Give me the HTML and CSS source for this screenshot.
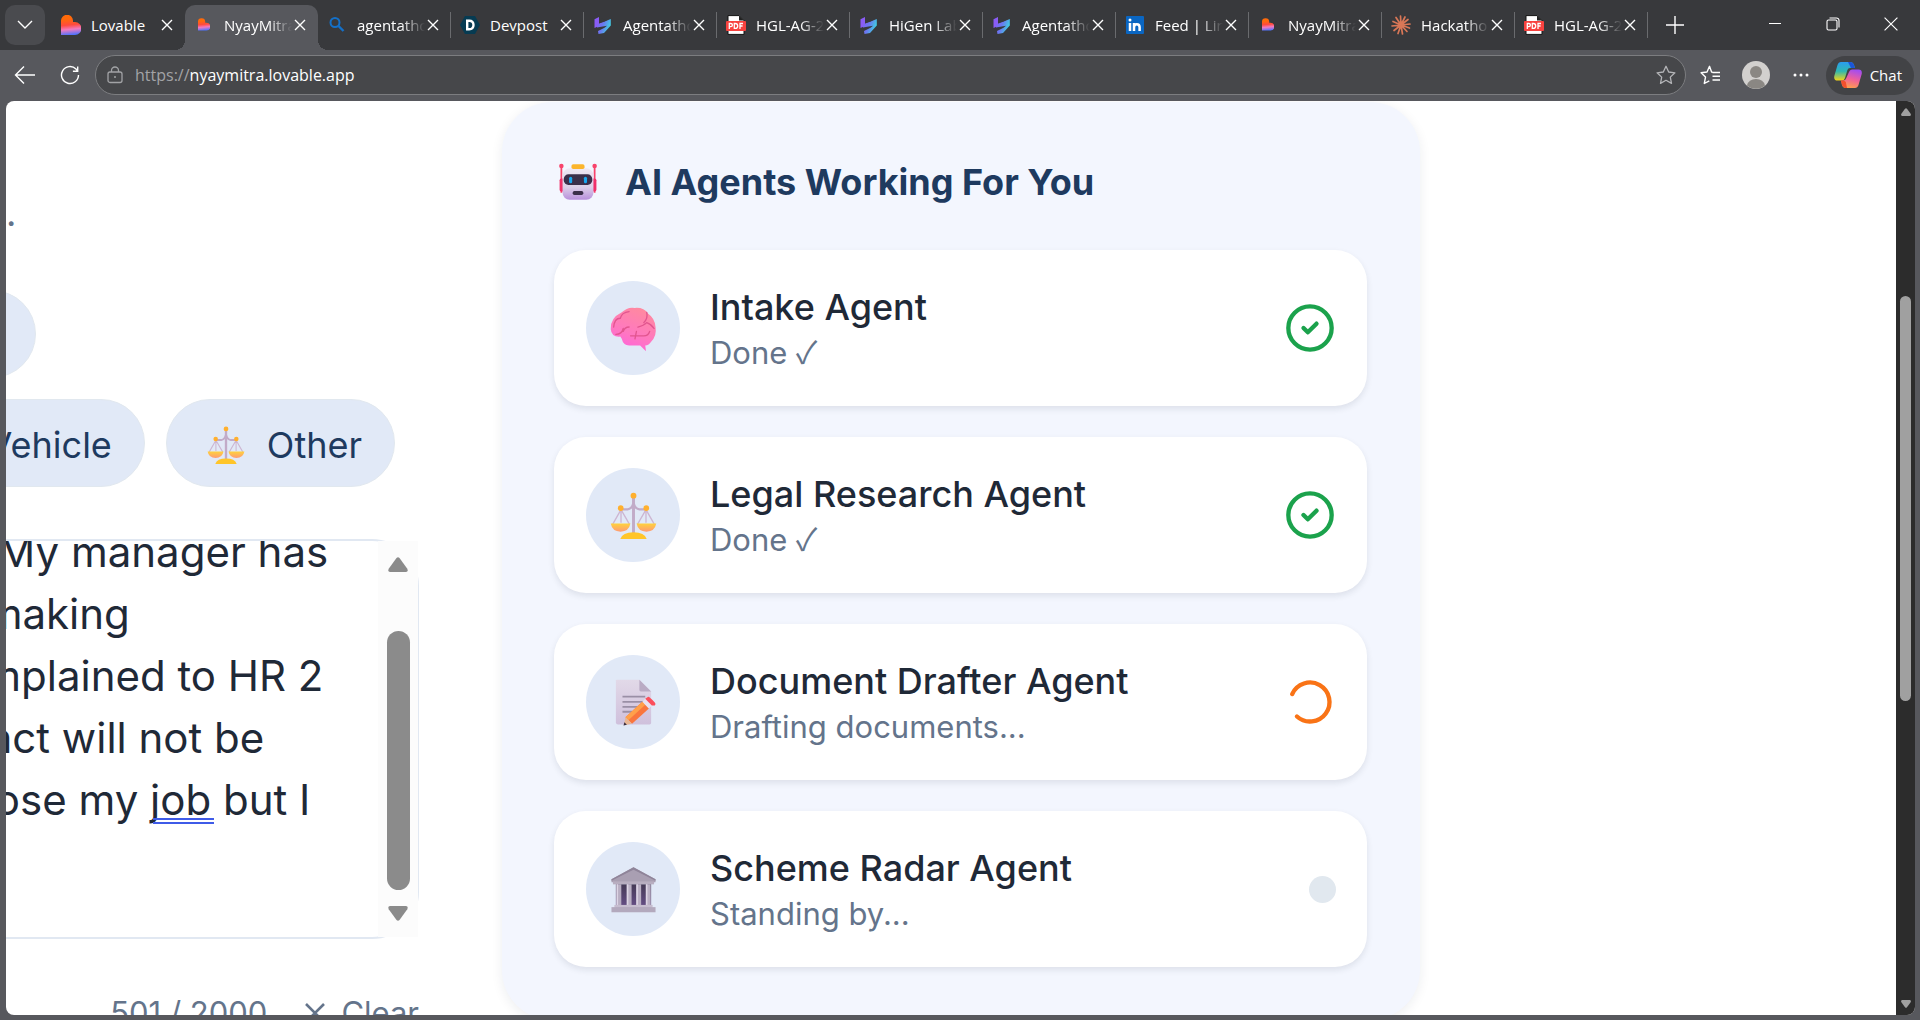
FILE: index.html
```html
<!DOCTYPE html>
<html lang="en">
<head>
<meta charset="utf-8">
<title>NyayMitra</title>
<link rel="stylesheet" href="styles.css">
</head>
<body>
<svg class="sprite" aria-hidden="true">
  <defs>
    <linearGradient id="g-heart" x1="0.4" y1="0" x2="0.5" y2="1">
      <stop offset="0.2" stop-color="#ff6a0a"/><stop offset="0.5" stop-color="#ff4a3d"/><stop offset="0.72" stop-color="#f27ac0"/><stop offset="1" stop-color="#4a72ff"/>
    </linearGradient>
    <linearGradient id="g-hi" x1="0" y1="0" x2="1" y2="0.4">
      <stop offset="0" stop-color="#8a5cf5"/><stop offset="0.5" stop-color="#6a78f0"/><stop offset="1" stop-color="#3fd0e0"/>
    </linearGradient>
    <linearGradient id="g-pan" x1="0" y1="0" x2="0" y2="1">
      <stop offset="0" stop-color="#ffd23c"/><stop offset="1" stop-color="#ff9a74"/>
    </linearGradient>
    <linearGradient id="g-brain" x1="0.7" y1="0" x2="0.3" y2="1">
      <stop offset="0" stop-color="#ff8a9e"/><stop offset="0.6" stop-color="#ff78c0"/><stop offset="1" stop-color="#ff62de"/>
    </linearGradient>
    <linearGradient id="g-paper" x1="0" y1="0" x2="0" y2="1">
      <stop offset="0" stop-color="#e2d9e8"/><stop offset="1" stop-color="#cfc0dc"/>
    </linearGradient>
    <linearGradient id="g-robot" x1="0" y1="0" x2="0" y2="1">
      <stop offset="0" stop-color="#eee8f4"/><stop offset="0.6" stop-color="#dccfe8"/><stop offset="1" stop-color="#b88fdc"/>
    </linearGradient>
    <linearGradient id="g-dark" x1="0" y1="0" x2="0" y2="1">
      <stop offset="0" stop-color="#453a55"/><stop offset="1" stop-color="#68508a"/>
    </linearGradient>
    <linearGradient id="g-cop1" x1="0" y1="0" x2="0" y2="1">
      <stop offset="0" stop-color="#2a9cf0"/><stop offset="0.5" stop-color="#2fb8b0"/><stop offset="1" stop-color="#f4d516"/>
    </linearGradient>
    <linearGradient id="g-cop2" x1="0.6" y1="0" x2="0.3" y2="1">
      <stop offset="0" stop-color="#a34df0"/><stop offset="0.5" stop-color="#f0609a"/><stop offset="1" stop-color="#ffa348"/>
    </linearGradient>
  </defs>
  <symbol id="heart" viewBox="0 0 20 20"><path fill="url(#g-heart)" d="M0 6a6 6 0 0 1 12-.5V7h2a6.500 6.500 0 0 1 0 13H0z"/></symbol>
  <symbol id="search" viewBox="0 0 20 20"><circle cx="8" cy="7.500" r="4.500" fill="none" stroke="#1470c8" stroke-width="2"/><path d="M11.500 11l5 5" stroke="#1470c8" stroke-width="2.400"/></symbol>
  <symbol id="devpost" viewBox="0 0 20 20"><path fill="#063b52" d="M5 1h10l5 9-5 9H5l-5-9z"/><path fill="none" stroke="#fff" stroke-width="2.400" d="M7.200 5.700v8.600h2q4.300 0 4.300-4.300t-4.300-4.300z"/></symbol>
  <symbol id="higen" viewBox="0 0 20 20"><path fill="#8a5cf5" d="M1.500 4.200L6 2v9l-4.500 2z"/><path fill="url(#g-hi)" d="M4 9.200l7-2.400L17.800 4v6.500L11 18l-5.500 1-.5-3 6.500-3.200 2.500-2L4 12.500z"/><path fill="#38393c" d="M6 2.500v5.700l8-2.600z"/></symbol>
  <symbol id="pdf" viewBox="0 0 20 20"><path fill="#fff" stroke="#111" stroke-width="1" d="M2 .6h11l5 5v13.800H2z"/><path fill="#222" d="M13 .6v5h5z"/><rect x="0" y="6" width="20" height="10" rx="1" fill="#f8423f"/><path fill="none" stroke="#fff" stroke-width="1.300" d="M3.300 14V8.500h1.500a1.500 1.500 0 0 1 0 3.200H3.500M8.300 8.500v4.900h1q2.400 0 2.400-2.450t-2.400-2.450zM14 14V8.500h3M14 11h2.600"/></symbol>
  <symbol id="linkedin" viewBox="0 0 20 20"><rect x="1" y="1" width="18" height="18" rx="1" fill="#0a66c2"/><path stroke="#fff" stroke-width="2.500" fill="none" d="M5 8v8M9 8v8M9 12.500q0-3.300 2.800-3.300t2.800 3V16"/><circle cx="5" cy="5" r="1.500" fill="#fff"/></symbol>
  <symbol id="burst" viewBox="0 0 20 20"><path stroke="#d97757" stroke-width="1.700" stroke-linecap="round" d="M10 10L9.500 1M10 10l4-8M10 10l7-5.500M10 10l9-1M10 10l8.500 3M10 10l6 6.500M10 10l1.500 9M10 10l-3 8.500M10 10l-7 5.500M10 10l-9 1M10 10L2 6.500M10 10L5 2.500"/></symbol>
  <symbol id="x" viewBox="0 0 12 12"><path d="M1 1l10 10M11 1L1 11" stroke="currentColor" stroke-width="1.400" fill="none"/></symbol>
  <symbol id="scales" viewBox="0 0 32 32">
    <path fill="none" stroke="#cdb6d2" stroke-width="0.900" d="M7.500 12L1.800 22M7.500 12v9M7.500 12l5.800 10M24.500 12l-5.800 10M24.500 12v9M24.500 12l5.700 10"/>
    <path fill="none" stroke="#c2abc8" stroke-width="1.500" d="M7.500 11.800h4.500q3-.5 3.800-4M24.500 11.800H20q-3-.5-3.800-4"/>
    <path stroke="#c2abc8" stroke-width="2" d="M16 4v24"/>
    <path fill="url(#g-pan)" d="M.5 21.500h13.400q-1 5.500-6.700 5.500T.5 21.500zM18.100 21.500h13.400q-1 5.500-6.700 5.500t-6.700-5.500z"/>
    <path fill="#ffc529" d="M7 32q1.500-4.600 9-4.600T25 32z"/>
    <circle cx="16" cy="2.500" r="2" fill="#ffb02e"/><circle cx="7.300" cy="11" r="1.900" fill="#ffb02e"/><circle cx="24.700" cy="11" r="1.900" fill="#ffb02e"/>
  </symbol>
</svg>

<header class="browser">
  <div class="tabstrip">
    <button class="tab-search" aria-label="Search tabs"><svg width="16" height="10" viewBox="0 0 16 10"><path d="M1 1l7 7 7-7" fill="none" stroke="#fff" stroke-width="1.400"/></svg></button>
    <nav class="tabs" aria-label="Tabs">
      <div class="tab tab--plain"><svg class="fav"><use href="#heart"/></svg><span class="tab-title">Lovable</span><button class="tab-close" aria-label="Close tab"><svg><use href="#x"/></svg></button></div>
      <div class="tab tab--active"><svg class="fav fav--small"><use href="#heart"/></svg><span class="tab-title">NyayMitra</span><button class="tab-close" aria-label="Close tab"><svg><use href="#x"/></svg></button></div>
      <div class="tab"><svg class="fav"><use href="#search"/></svg><span class="tab-title">agentatho</span><button class="tab-close" aria-label="Close tab"><svg><use href="#x"/></svg></button></div>
      <div class="tab"><svg class="fav"><use href="#devpost"/></svg><span class="tab-title">Devpost</span><button class="tab-close" aria-label="Close tab"><svg><use href="#x"/></svg></button></div>
      <div class="tab"><svg class="fav"><use href="#higen"/></svg><span class="tab-title">Agentatho</span><button class="tab-close" aria-label="Close tab"><svg><use href="#x"/></svg></button></div>
      <div class="tab"><svg class="fav"><use href="#pdf"/></svg><span class="tab-title">HGL-AG-2</span><button class="tab-close" aria-label="Close tab"><svg><use href="#x"/></svg></button></div>
      <div class="tab"><svg class="fav"><use href="#higen"/></svg><span class="tab-title">HiGen Lab</span><button class="tab-close" aria-label="Close tab"><svg><use href="#x"/></svg></button></div>
      <div class="tab"><svg class="fav"><use href="#higen"/></svg><span class="tab-title">Agentatho</span><button class="tab-close" aria-label="Close tab"><svg><use href="#x"/></svg></button></div>
      <div class="tab"><svg class="fav"><use href="#linkedin"/></svg><span class="tab-title">Feed | Lin</span><button class="tab-close" aria-label="Close tab"><svg><use href="#x"/></svg></button></div>
      <div class="tab"><svg class="fav fav--small"><use href="#heart"/></svg><span class="tab-title">NyayMitra</span><button class="tab-close" aria-label="Close tab"><svg><use href="#x"/></svg></button></div>
      <div class="tab"><svg class="fav"><use href="#burst"/></svg><span class="tab-title">Hackatho</span><button class="tab-close" aria-label="Close tab"><svg><use href="#x"/></svg></button></div>
      <div class="tab"><svg class="fav"><use href="#pdf"/></svg><span class="tab-title">HGL-AG-2</span><button class="tab-close" aria-label="Close tab"><svg><use href="#x"/></svg></button></div>
    </nav>
    <button class="new-tab" aria-label="New tab"><svg width="20" height="20" viewBox="0 0 20 20"><path d="M10 1v18M1 10h18" stroke="#fff" stroke-width="1.400"/></svg></button>
    <div class="window-controls">
      <button aria-label="Minimize"><svg width="14" height="14" viewBox="0 0 14 14"><path d="M1 6.500h12" stroke="#fff"/></svg></button>
      <button aria-label="Restore"><svg width="14" height="14" viewBox="0 0 14 14" fill="none" stroke="#fff" stroke-width="1.100"><rect x="1" y="3" width="10" height="10" rx="1.500"/><path d="M3.500 1h7A2.500 2.500 0 0 1 13 3.500v7"/></svg></button>
      <button aria-label="Close"><svg width="14" height="14" viewBox="0 0 12 12"><path d="M.5.500l11 11M11.500.500l-11 11" stroke="#fff"/></svg></button>
    </div>
  </div>
  <div class="toolbar">
    <div class="tool-group">
      <button class="tool" aria-label="Back"><svg width="22" height="20" viewBox="0 0 22 20" fill="none" stroke="#fff" stroke-width="1.400"><path d="M21 10H2M10 1.500L1.500 10l8.500 8.500"/></svg></button>
      <button class="tool" aria-label="Refresh"><svg width="20" height="20" viewBox="0 0 20 20" fill="none" stroke="#fff" stroke-width="1.400"><path d="M18.500 10A8.500 8.500 0 1 1 16 4l1.500 1.800M17.700 1.500v4.800h-4.800"/></svg></button>
    </div>
    <div class="address">
      <svg width="16" height="18" viewBox="0 0 16 18" fill="none" stroke="#a2a3a6" stroke-width="1.300"><rect x="1" y="6" width="14" height="10.500" rx="2"/><path d="M4.500 6V4.500a3.500 3.500 0 0 1 7 0V6"/><circle cx="8" cy="11" r="1" fill="#a2a3a6" stroke="none"/></svg>
      <span class="url" role="textbox" aria-label="Address"><span class="url-scheme">https://</span>nyaymitra.lovable.app</span>
      <svg width="20" height="20" viewBox="0 0 20 20" fill="none" stroke="#b4b5b8" stroke-width="1.300" stroke-linejoin="round"><path d="M10 1.300l2.700 5.700 6.200.8-4.600 4.300 1.200 6.300L10 15.300l-5.500 3.100 1.200-6.300L1.100 7.800l6.200-.8z"/></svg>
    </div>
    <div class="tool-group">
      <button class="tool" aria-label="Favorites"><svg width="21" height="20" viewBox="0 0 21 20" fill="none" stroke="#fff" stroke-width="1.400" stroke-linejoin="round"><path d="M12.500 7.200l-.9-.2L9.500 1.300 7 7l-5.900.8 4.400 4.300-1.200 6.400 5-2.600M12.500 7.500H20M12.500 11.200H20M12.500 15H20"/></svg></button>
      <button class="tool" aria-label="Profile"><svg width="28" height="28" viewBox="0 0 28 28"><circle cx="14" cy="14" r="14" fill="#d2d0ce"/><circle cx="14" cy="11" r="6" fill="#8a8783"/><path fill="#8a8783" d="M5 24.500q1.500-6.500 9-6.500t9 6.500A14 14 0 0 1 5 24.500z"/></svg></button>
      <button class="tool" aria-label="Settings and more"><svg width="16" height="4" viewBox="0 0 16 4" fill="#fff"><circle cx="2" cy="2" r="1.500"/><circle cx="8" cy="2" r="1.500"/><circle cx="14" cy="2" r="1.500"/></svg></button>
    </div>
    <button class="chat"><svg width="28" height="26" viewBox="0 0 28 26"><path fill="url(#g-cop1)" d="M7 0h9q3 0 4 3l1 3h-5q-2 0-2.600 2L11 16q-.8 2.500-3 2.500H3.500Q-.5 18.500.3 14L3.500 3Q4.500 0 7 0z"/><path fill="#1c55d8" d="M14 0h2q3 0 4 3l1 3h-4q-1.500-3-3-6z"/><path fill="url(#g-cop2)" d="M21 26h-9q-3 0-4-3l-1-4.500h2q2.500 0 3.300-2.500L15 10q.8-2.500 3-2.500h6.500q4 0 3.200 4.500L24.500 23q-1 3-3.500 3z"/><path fill="#f2502e" d="M13 26h-1q-3 0-4-3l-1-4.500h2q2 0 2.800 1.500z"/></svg>Chat</button>
  </div>
</header>

<div class="viewport">
  <main class="page">
    <section class="intake" aria-label="Your problem">
      <p class="lead">.</p>
      <div class="chips">
        <div class="chip-row chip-row--short"><button class="chip" aria-label="Topic"></button></div>
        <div class="chip-row">
          <button class="chip">Vehicle</button>
          <button class="chip"><svg class="chip-icon"><use href="#scales"/></svg>Other</button>
        </div>
      </div>
      <div class="editor">
        <textarea id="story" class="story" aria-label="Describe your problem" spellcheck="false">
at work. My manager has
kept on making
and I complained to HR 2
so contract will not be
want to lose my job but I
</textarea>
        <span class="grammar-mark"></span>
        <div class="scroll scroll--light" aria-hidden="true">
          <svg width="20" height="15" viewBox="0 0 20 15"><path fill="#8b8b8b" d="M8.500 1q1.500-1.600 3 0l7.800 10.800q1.200 3-1.300 3.200H2Q-.5 14.800.7 11.800z"/></svg>
          <div class="thumb"></div>
          <svg width="20" height="15" viewBox="0 0 20 15"><path fill="#8b8b8b" d="M8.500 14q1.500 1.600 3 0l7.800-10.800Q20.500.2 18 0H2Q-.5.2.7 3.200z"/></svg>
        </div>
      </div>
      <div class="editor-foot">
        <span>501 / 2000</span>
        <button class="clear"><svg width="20" height="20" viewBox="0 0 20 20"><path d="M1 1l18 18M19 1L1 19" stroke="currentColor" stroke-width="2.600"/></svg>Clear</button>
      </div>
    </section>

    <section class="agents">
      <h2 class="agents-title">
        <svg width="38" height="38" viewBox="0 0 32 32"><path stroke="#f8436b" stroke-width="1.500" d="M2 3v22M30 3v22"/><circle cx="2" cy="2.500" r="1.900" fill="#f8436b"/><circle cx="30" cy="2.500" r="1.900" fill="#f8436b"/><rect x=".5" y="13" width="4" height="11" rx="1.500" fill="#f0306a"/><rect x="27.500" y="13" width="4" height="11" rx="1.500" fill="#f0306a"/><rect x="3" y="4.500" width="26" height="26.500" rx="6" fill="url(#g-robot)"/><rect x="10.500" y="1" width="11" height="4" rx="1.500" fill="#fbb52c"/><rect x="4" y="9.500" width="24" height="9" rx="4" fill="#3b2f4a"/><rect x="8.500" y="11.500" width="2.600" height="5.500" rx="1.300" fill="#18a8f0"/><rect x="21" y="11.500" width="2.600" height="5.500" rx="1.300" fill="#18a8f0"/><rect x="11.500" y="23.500" width="9" height="3.500" rx="1.500" fill="#3b2f4a"/></svg>
        AI Agents Working For You
      </h2>
      <ul class="agent-list">
        <li class="agent">
          <span class="avatar"><svg viewBox="0 0 32 32"><path fill="url(#g-brain)" d="M8 5q4-4 9-3 6-.5 9 4 4.500 3 5 9 1 6-3 10-1.500 2.500-4 2.500l.5 4-4-4H13q-4 0-5-4.500l-1-1.500q-6 .5-6.500-5Q0 9 8 5z"/><path fill="none" stroke="#e2558f" stroke-width="0.900" stroke-linecap="round" d="M2.500 15Q3 9 7 9q1-4 6-4.500M25 5q1 4-2 7M19 15q4-1 6-3 3 1 5 4M9 16q-1 4-5 4M13 15q-3 0-4 3M14 21h9M18 18l-1 5M23 21q3 0 4-3"/></svg></span>
          <div class="agent-text"><h3>Intake Agent</h3><p>Done <span class="tick">✓</span></p></div>
          <svg class="status status--done" viewBox="0 0 24 24"><circle cx="12" cy="12" r="10"/><path d="M9 12l2 2 4-4"/></svg>
        </li>
        <li class="agent">
          <span class="avatar"><svg><use href="#scales"/></svg></span>
          <div class="agent-text"><h3>Legal Research Agent</h3><p>Done <span class="tick">✓</span></p></div>
          <svg class="status status--done" viewBox="0 0 24 24"><circle cx="12" cy="12" r="10"/><path d="M9 12l2 2 4-4"/></svg>
        </li>
        <li class="agent">
          <span class="avatar"><svg viewBox="0 0 32 32"><path fill="url(#g-paper)" d="M4.500.5H20l8 8V30q0 1-1 1H5.500q-1.500 0-1.500-1.500V1z"/><path fill="#b9abc4" d="M20 .5l8 8h-7q-1 0-1-1z"/><path stroke="#9a8fa6" stroke-width="1.200" d="M8.500 12H24M8.500 15.500H23M8.500 19H19M8.500 22.300H15"/><path fill="#f9763e" d="M10.500 26L22 15.500l4.500 4.500L15 30.500z"/><path fill="#ffa04a" d="M10.500 26L22 15.500l2 2L12.500 28z"/><path fill="#e9b692" d="M10.500 26l4.500 4.500-5.500 1z"/><path fill="#3a2f40" d="M9.800 29.500l1.700 1.700-2.300.5z"/><path fill="#e9e2f0" d="M22 15.500l2-2 4.500 4.500-2 2z"/><path fill="#fb4f5c" d="M24 13.500l2-1.500q1 0 4.500 4 1 1 0 2L28.500 18z"/></svg></span>
          <div class="agent-text"><h3>Document Drafter Agent</h3><p>Drafting documents...</p></div>
          <svg class="status status--busy" viewBox="0 0 24 24"><path transform="rotate(204 12 12)" d="M21 12a9 9 0 1 1-6.219-8.560"/></svg>
        </li>
        <li class="agent">
          <span class="avatar"><svg viewBox="0 0 32 32"><path fill="#a99fb2" d="M16 .8L31 9v2H1V9z"/><path fill="#8f8499" d="M16 .8L31 9v1L16 2.500 1 10V9z"/><rect x="2" y="10.500" width="28" height="2" fill="#b8aec0"/><rect x="4" y="12.500" width="24" height="16" fill="url(#g-dark)"/><path stroke="#b9afc3" stroke-width="3.400" d="M6 12.500v15.500M13 12.500v15.500M19.500 12.500v15.500M26 12.500v15.500"/><path stroke="#dcd4e4" stroke-width="1" d="M5 12.500v15.500M12 12.500v15.500M18.500 12.500v15.500M25 12.500v15.500"/><rect x="3" y="26.500" width="26" height="2" fill="#c6bdcf"/><rect x="1" y="28" width="30" height="3.500" fill="#b3a9bd"/></svg></span>
          <div class="agent-text"><h3>Scheme Radar Agent</h3><p>Standing by...</p></div>
          <span class="status-idle"></span>
        </li>
      </ul>
    </section>
  </main>
  <div class="scroll scroll--dark" aria-hidden="true">
    <svg width="10" height="8" viewBox="0 0 10 8"><path fill="#a0a0a0" d="M4 .8q1-1 2 0L9.800 6q.4 1.700-.8 2H1Q-.2 7.700.2 6z"/></svg>
    <div class="thumb"></div>
    <svg width="10" height="8" viewBox="0 0 10 8"><path fill="#a0a0a0" d="M4 7.200q1 1 2 0L9.800 2Q10.200.3 9 0H1Q-.2.3.2 2z"/></svg>
  </div>
</div>
<script src="script.js"></script>
</body>
</html>
```

FILE: styles.css
```css
*, *::before, *::after { box-sizing: border-box; }

body {
  margin: 0;
  height: 100vh;
  display: flex;
  flex-direction: column;
  overflow: hidden;
  background: #57585d;
  font-family: Inter, "Liberation Sans", sans-serif;
}

h2, h3, p, ul { margin: 0; padding: 0; }
button { border: 0; padding: 0; background: none; color: inherit; font: inherit; }
svg { display: block; flex: none; }
.sprite { position: absolute; width: 0; height: 0; }

/* Browser frame */
.browser { flex: none; color: #fff; font-family: "Open Sans", "Noto Sans", sans-serif; }

.tabstrip { display: flex; align-items: center; height: 50px; padding-left: 5px; background: #38393c; }
.tab-search { display: grid; place-items: center; width: 40px; height: 40px; margin-right: 7px; border-radius: 10px; background: #4a4b4f; }
.tabs { display: flex; align-self: stretch; min-width: 0; }
.tab { position: relative; display: flex; align-items: center; gap: 10px; width: 133px; padding: 0 12px 0 9px; }
.tab::after { content: ""; position: absolute; right: 0; top: 12px; width: 1px; height: 26px; background: #6a6b6e; }
.tab--plain::after { content: none; }
.tab--active { margin-top: 5px; padding-bottom: 5px; border-radius: 10px 10px 0 0; background: #57585d; }
.tab--active::before, .tab--active::after {
  content: ""; position: absolute; top: auto; right: auto; bottom: 0; left: -10px; width: 10px; height: 10px;
  background: radial-gradient(circle at 0 0, transparent 10px, #57585d 10px);
}
.tab--active::after { left: 100%; background: radial-gradient(circle at 100% 0, transparent 10px, #57585d 10px); }
.fav { width: 20px; height: 20px; }
.fav--small { padding: 3px 4px 4px; }
.tab-title {
  flex: 1; min-width: 0; overflow: hidden; white-space: nowrap; font-size: 15px; line-height: 20px;
  mask-image: linear-gradient(to right, #000 65%, transparent);
}
.tab--plain .tab-title, .tab:nth-child(4) .tab-title { mask-image: none; }
.tab-close { margin-left: -8px; }
.tab-close svg { width: 12px; height: 12px; }
.new-tab { margin-left: 17px; }
.window-controls { display: flex; margin-left: auto; align-self: stretch; }
.window-controls button { display: grid; place-items: center; width: 58px; padding-bottom: 2px; }

.toolbar { display: flex; align-items: center; gap: 10px; height: 51px; padding: 0 6px 1px 10px; background: #57585d; }
.tool-group { display: flex; align-items: center; gap: 15px; }
.tool { display: grid; place-items: center; width: 30px; height: 30px; }
.address {
  flex: 1; display: flex; align-items: center; gap: 12px; height: 40px; padding: 0 9px 0 11px;
  border: 1px solid #7c7d80; border-radius: 20px; background: #46474a;
}
.url { flex: 1; font-size: 16px; line-height: 24px; }
.url-scheme { color: #a2a3a6; }
.chat {
  display: flex; align-items: center; gap: 8px; height: 39px; padding: 0 12px 0 8px; border-radius: 20px;
  background: #424346; font-size: 15px;
}

/* Page area */
.viewport { flex: 1; min-height: 0; display: flex; margin: 0 5px 5px 6px; overflow: hidden; border-radius: 8px; background: #fff; }
.page {
  flex: 1; min-width: 0; min-height: 0; overflow: hidden;
  display: grid; grid-template-columns: 413px minmax(0, 918px) 1fr; column-gap: 83px; align-items: start;
}

.scroll { flex: none; display: flex; flex-direction: column; align-items: center; justify-content: space-between; }
.scroll--dark { width: 19px; padding: 7px 0; background: #2c2c2c; }
.scroll--dark .thumb { width: 11px; height: 45%; margin-bottom: 120px; border-radius: 6px; background: #a0a0a0; }

/* Intake column */
.intake { min-width: 0; padding-top: 81px; color: #1f2937; }
.lead { color: #64748b; font-size: 36px; line-height: 62px; }
.chips { display: flex; flex-direction: column; gap: 21px; margin: 46px 0 52px; }
.chip-row { display: flex; justify-content: flex-end; gap: 21px; padding-right: 24px; }
.chip-row--short { padding-right: 383px; }
.chip {
  flex: none; display: flex; align-items: center; gap: 22px; height: 88px; padding: 3px 32px 0;
  border: 1px solid #e1e8ef; border-radius: 44px; background: #e1e9f7; color: #1e3a5f; font-size: 36px; line-height: 56px;
}
.chip:empty { width: 160px; }
.chip-icon { width: 38px; height: 38px; margin-left: 8px; }

.editor { position: relative; display: flex; justify-content: flex-end; height: 400px; border: solid #e1e8f2; border-width: 2px 1px 2px 0; border-radius: 0 47px 47px 0; }
.story {
  flex: none; width: 599px; height: 396px; padding: 43px 47px 44px; border: 0; outline: 0; resize: none; overflow: hidden;
  background: none; color: #1f2937; font-family: inherit; font-size: 42px; line-height: 62px; white-space: pre;
}
.grammar-mark { position: absolute; left: 147px; top: 277px; width: 61px; height: 6px; border: solid #3f5be8; border-width: 2px 0; }
.scroll--light { width: 40px; height: 396px; padding: 16px 0; background: #fcfcfc; }
.scroll--light .thumb { width: 23px; height: 259px; margin-top: 42px; border-radius: 12px; background: #8b8b8b; }

.editor-foot { display: flex; justify-content: flex-end; gap: 38px; margin-top: 53px; color: #64748b; font-size: 31px; line-height: 42px; }
.clear { display: flex; align-items: center; gap: 16px; }

/* Agents panel */
.agents { margin-top: 1px; padding: 52px 53px 53px 52px; border-radius: 50px; background: #f3f6fe; box-shadow: 0 3px 12px rgba(30, 41, 59, 0.08); }
.agents-title { display: flex; align-items: center; gap: 28px; margin-bottom: 40px; padding-left: 5px; color: #1e3a5f; font-size: 36px; font-weight: 700; line-height: 56px; }
.agent-list { display: flex; flex-direction: column; gap: 31px; list-style: none; }
.agent { display: flex; align-items: center; padding: 31px 31px 31px 32px; border-radius: 32px; background: #fff; box-shadow: 0 3px 6px rgba(30, 41, 59, 0.1); }
.avatar { flex: none; display: grid; place-items: center; width: 94px; height: 94px; margin-right: 30px; border-radius: 50%; background: #e1e9f7; }
.avatar svg { width: 47px; height: 47px; }
.agent-text { flex: 1; min-width: 0; }
.agent-text h3 { color: #1f2937; font-size: 36px; font-weight: 500; line-height: 50px; }
.agent-text p { color: #64748b; font-size: 31px; line-height: 42px; }
.tick { font-family: "Noto Sans CJK SC", sans-serif; line-height: 1; }
.status { width: 52px; height: 52px; fill: none; stroke-width: 2; stroke-linecap: round; stroke-linejoin: round; }
.status--done { stroke: #1ba24c; }
.status--busy { stroke: #f97316; }
.status-idle { width: 27px; height: 27px; border-radius: 50%; background: #e1e8ef; }
```

FILE: script.js
```js
const story = document.getElementById("story");
story.scrollTop = story.scrollHeight;
```
